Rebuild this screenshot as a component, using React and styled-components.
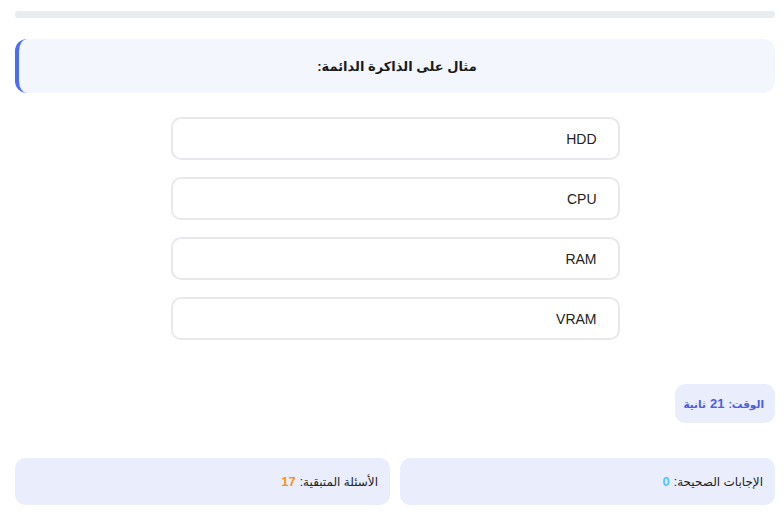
import React from "react";
import styled, { createGlobalStyle } from "styled-components";

const options = ["HDD", "CPU", "RAM", "VRAM"];

const App = () => (
  <>
    <GlobalStyle />
    <Page dir="rtl">
      <Progress>
        <ProgressFill style={{ width: "0%" }} />
      </Progress>

      <QuestionBox>
        <QuestionTitle>مثال على الذاكرة الدائمة:</QuestionTitle>
      </QuestionBox>

      <OptionList>
        {options.map((o) => (
          <OptionButton key={o}>{o}</OptionButton>
        ))}
      </OptionList>

      <TimerRow>
        <Timer>
          الوقت: <b>21</b> ثانية
        </Timer>
      </TimerRow>

      <Stats>
        <StatCard>
          الإجابات الصحيحة: <StatValue color="#4fc3f7">0</StatValue>
        </StatCard>
        <StatCard>
          الأسئلة المتبقية: <StatValue color="#f7931e">17</StatValue>
        </StatCard>
      </Stats>
    </Page>
  </>
);

const GlobalStyle = createGlobalStyle`
  body {
    margin: 0;
    background: #ffffff;
    font-family: "Liberation Sans", "DejaVu Sans", Arial, sans-serif;
    color: #222;
  }
`;

const Page = styled.div`
  padding: 11px 9px 0 15px;
  display: flex;
  flex-direction: column;
`;

const Progress = styled.div`
  height: 7px;
  background: #e9ecef;
  border-radius: 4px;
  overflow: hidden;
`;

const ProgressFill = styled.div`
  height: 100%;
  background: #4a6cf7;
`;

const QuestionBox = styled.div`
  margin-top: 21px;
  height: 54px;
  background: #f3f6fd;
  border-left: 4px solid #4a6cf7;
  border-radius: 12px;
  display: flex;
  align-items: center;
  justify-content: center;
`;

const QuestionTitle = styled.h2`
  margin: 0;
  font-size: 13px;
  font-weight: bold;
  color: #1a1a1a;
`;

const OptionList = styled.div`
  margin: 24px auto 0;
  width: 449px;
  display: flex;
  flex-direction: column;
  gap: 17px;
`;

const OptionButton = styled.button`
  height: 43px;
  box-sizing: border-box;
  border: 2px solid #e6e8ec;
  border-radius: 10px;
  background: #fff;
  text-align: right;
  padding: 0 21px;
  font-family: "Liberation Sans", "DejaVu Sans", Arial, sans-serif;
  font-size: 14px;
  color: #222;
  cursor: pointer;
`;

const TimerRow = styled.div`
  margin-top: 44px;
  display: flex;
`;

const Timer = styled.div`
  width: 100px;
  box-sizing: border-box;
  height: 39px;
  padding: 0 11px;
  display: flex;
  align-items: center;
  gap: 4px;
  background: #e9edfc;
  border-radius: 10px;
  color: #4a5fe0;
  font-size: 10.5px;
  font-weight: bold;

  b {
    font-size: 13px;
  }
`;

const Stats = styled.div`
  margin-top: 35px;
  display: grid;
  grid-template-columns: 1fr 1fr;
  gap: 10px;
`;

const StatCard = styled.div`
  height: 47px;
  padding: 0 12px;
  display: flex;
  align-items: center;
  gap: 4px;
  background: #eaeefc;
  border-radius: 10px;
  font-size: 12px;
  color: #222;
`;

const StatValue = styled.span`
  color: ${(p) => p.color};
  font-weight: bold;
  font-size: 13px;
`;

export default App;
